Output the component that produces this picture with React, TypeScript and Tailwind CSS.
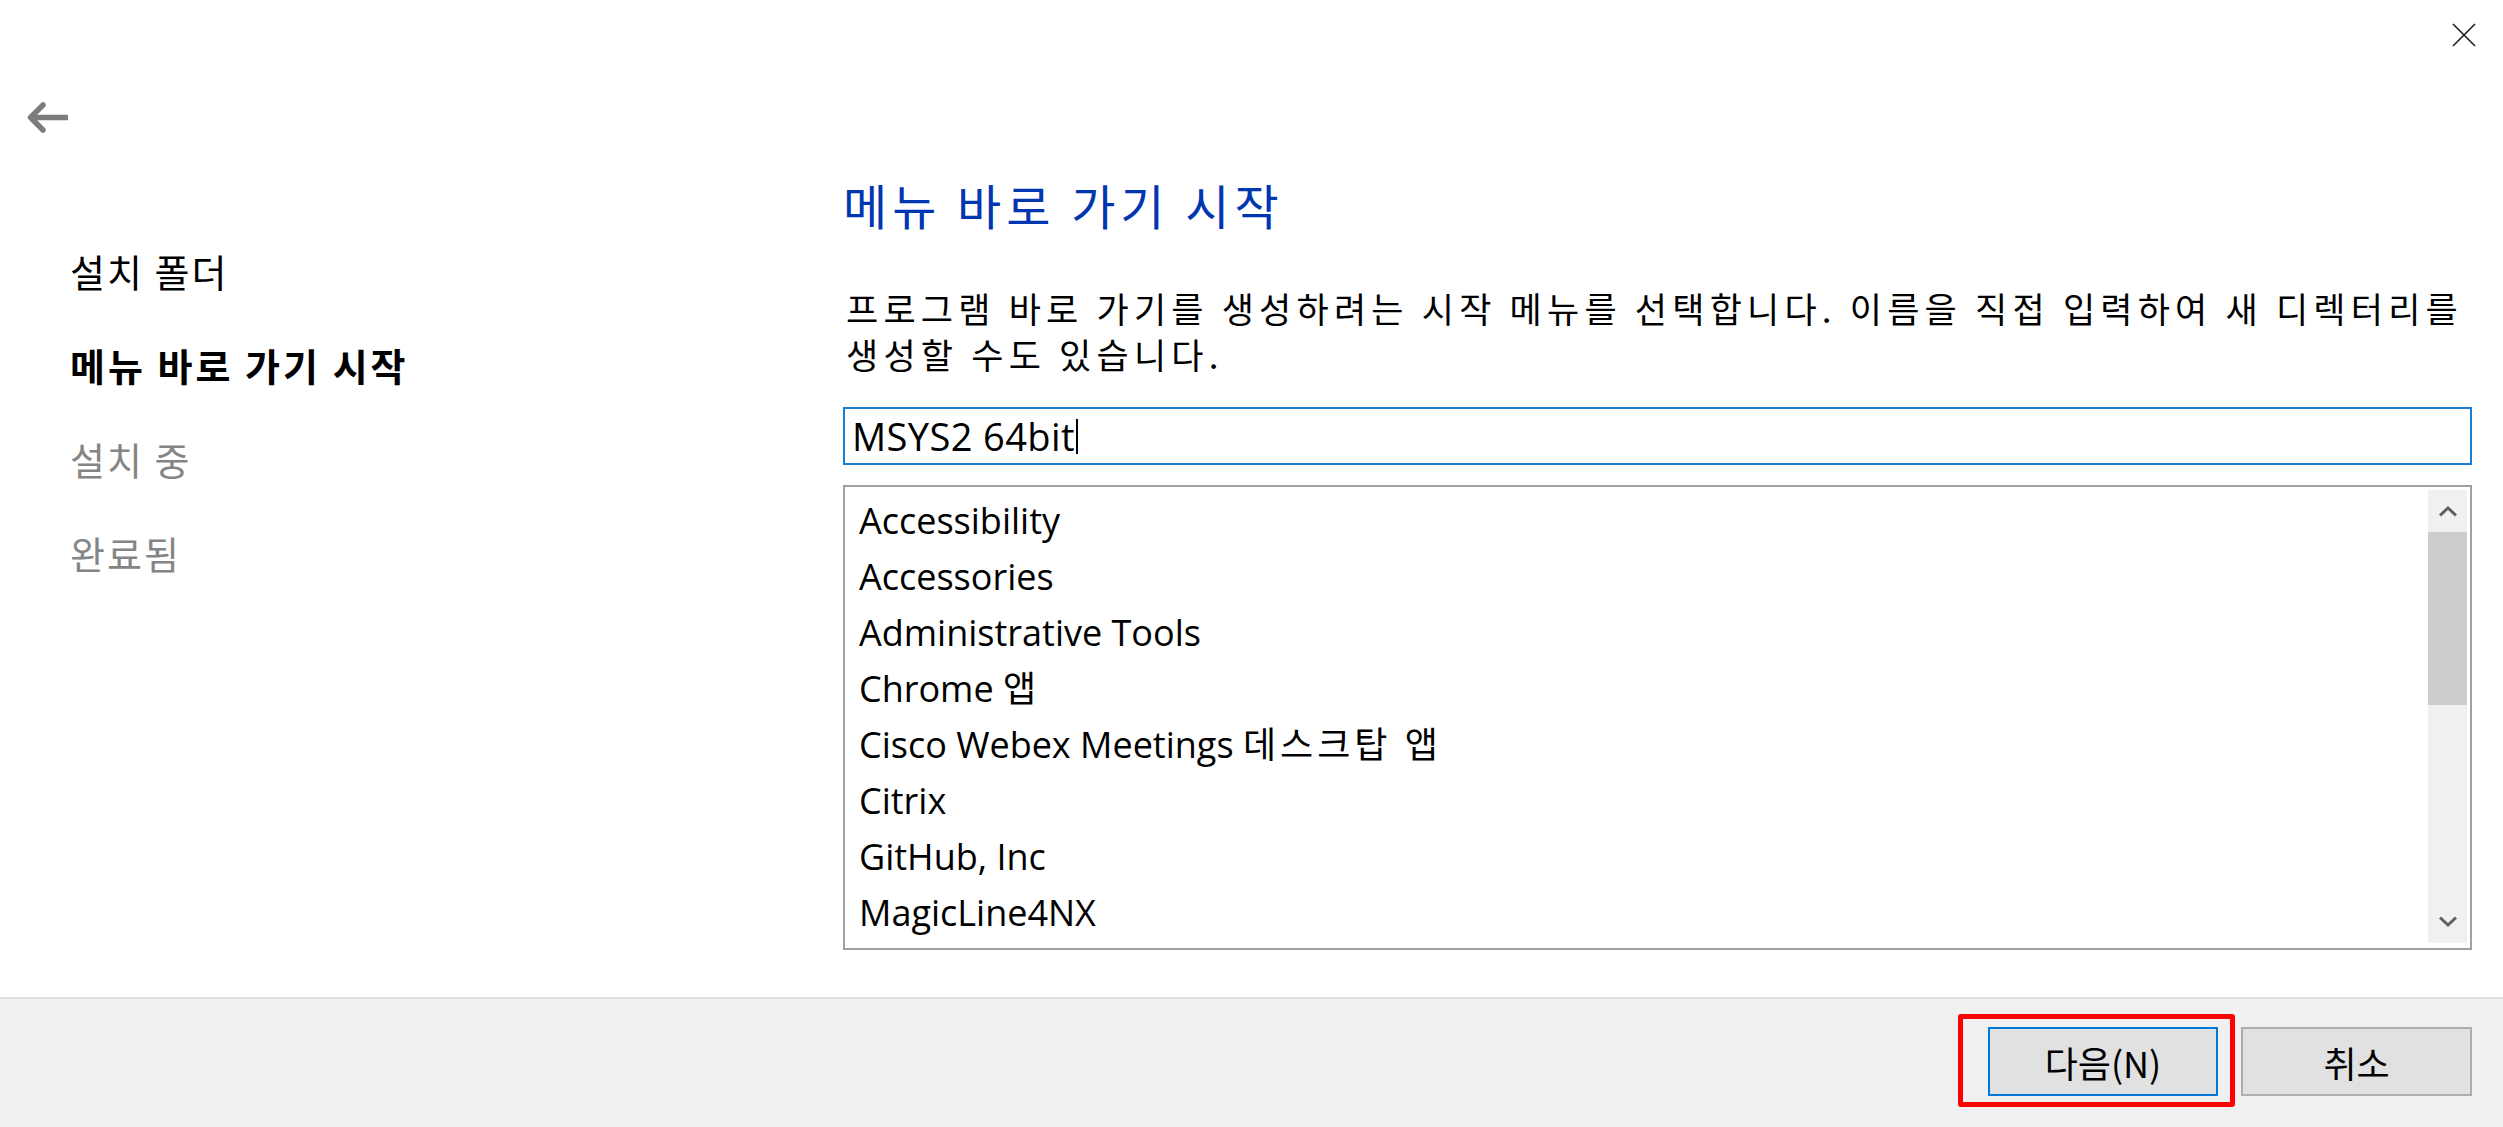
import React from "react";

const items: { en: string; ko?: string }[] = [
  { en: "Accessibility" },
  { en: "Accessories" },
  { en: "Administrative Tools" },
  { en: "Chrome ", ko: "앱" },
  { en: "Cisco Webex Meetings ", ko: "데스크탑 앱" },
  { en: "Citrix" },
  { en: "GitHub, Inc" },
  { en: "MagicLine4NX" },
];

export default function App() {
  return (
    <div className="relative w-[2503px] h-[1127px] bg-white flex flex-col overflow-hidden font-['Noto_Sans_CJK_KR',sans-serif] text-black">
      {/* close button */}
      <div className="absolute top-[23px] left-[2452px] w-[24px] h-[24px]">
        <svg width="24" height="24" viewBox="0 0 24 24">
          <path d="M1 1 L23 23 M23 1 L1 23" stroke="#1f1f1f" strokeWidth="1.6" fill="none" />
        </svg>
      </div>

      <div className="flex-1 flex">
        {/* left column */}
        <div className="w-[843px] shrink-0 flex flex-col">
          <div className="pt-[102px] pl-[26px]">
            <svg width="42" height="31" viewBox="0 0 42 31">
              <path d="M42 15.5 H6" stroke="#7c7c7c" strokeWidth="5.5" fill="none" />
              <path d="M17 3 L4.5 15.5 L17 28" stroke="#7c7c7c" strokeWidth="5.5" fill="none" strokeLinecap="round" strokeLinejoin="round" />
            </svg>
          </div>
          <div className="mt-[91px] pl-[70px] text-[38px] leading-[94px] tracking-[2px]">
            <div className="text-black">설치 폴더</div>
            <div className="text-black font-bold tracking-[3px]">메뉴 바로 가기 시작</div>
            <div className="text-[#858585]">설치 중</div>
            <div className="text-[#858585]">완료됨</div>
          </div>
        </div>

        {/* main content */}
        <div className="flex-1 pr-[31px] flex flex-col">
          <div className="pt-[176px] text-[48px] leading-[56px] tracking-[5px] text-[#0036b0]">메뉴 바로 가기 시작</div>
          <div className="mt-[53px] text-[35px] leading-[46px] tracking-[5.2px] pl-[3px] whitespace-nowrap">
            프로그램 바로 가기를 생성하려는 시작 메뉴를 선택합니다. 이름을 직접 입력하여 새 디렉터리를
            <br />
            생성할 수도 있습니다.
          </div>
          <div className="mt-[30px] h-[58px] border-2 border-[#1a7fd6] flex items-center pl-[7px] font-['Open_Sans','Noto_Sans_CJK_KR',sans-serif] text-[38px] tracking-[0.4px]">
            <span>MSYS2 64bit</span>
            <span className="w-[2px] h-[35px] bg-black ml-[1px]" />
          </div>
          <div className="mt-[20px] h-[465px] border-2 border-[#9ea1a6] flex">
            <div className="flex-1 pt-[6px] pl-[14px] font-['Open_Sans','Noto_Sans_CJK_KR',sans-serif] text-[36px]">
              {items.map((t) => (
                <div key={t.en} className="h-[56px] flex items-center whitespace-pre">
                  {t.en}
                  {t.ko && <span className="tracking-[4px]">{t.ko}</span>}
                </div>
              ))}
            </div>
            <div className="w-[39px] mt-[3px] mb-[5px] mr-[3px] bg-[#f0f0f0] flex flex-col">
              <div className="h-[42px] flex items-center justify-center">
                <svg width="20" height="12" viewBox="0 0 20 12">
                  <path d="M2 10.5 L10 3 L18 10.5" stroke="#606060" strokeWidth="3" fill="none" />
                </svg>
              </div>
              <div className="h-[173px] bg-[#cdcdcd]" />
              <div className="flex-1" />
              <div className="h-[42px] flex items-center justify-center">
                <svg width="20" height="12" viewBox="0 0 20 12">
                  <path d="M2 1.5 L10 9 L18 1.5" stroke="#606060" strokeWidth="3" fill="none" />
                </svg>
              </div>
            </div>
          </div>
        </div>
      </div>

      {/* footer */}
      <div className="h-[130px] shrink-0 bg-[#f0f0f0] border-t-2 border-[#dfdfdf] flex justify-end items-start pt-[28px] pr-[31px] gap-[23px]">
        <div className="relative">
          <div className="absolute -left-[30px] -right-[17px] -top-[13px] -bottom-[11px] border-[5px] border-[#ff0000] rounded-[3px]" />
          <button className="w-[230px] h-[69px] border-2 border-[#0078d7] bg-[#e1e1e1] text-[36px] flex items-center justify-center">
            다음(N)
          </button>
        </div>
        <button className="w-[231px] h-[69px] border-2 border-[#adadad] bg-[#e1e1e1] text-[36px] flex items-center justify-center">
          취소
        </button>
      </div>
    </div>
  );
}
